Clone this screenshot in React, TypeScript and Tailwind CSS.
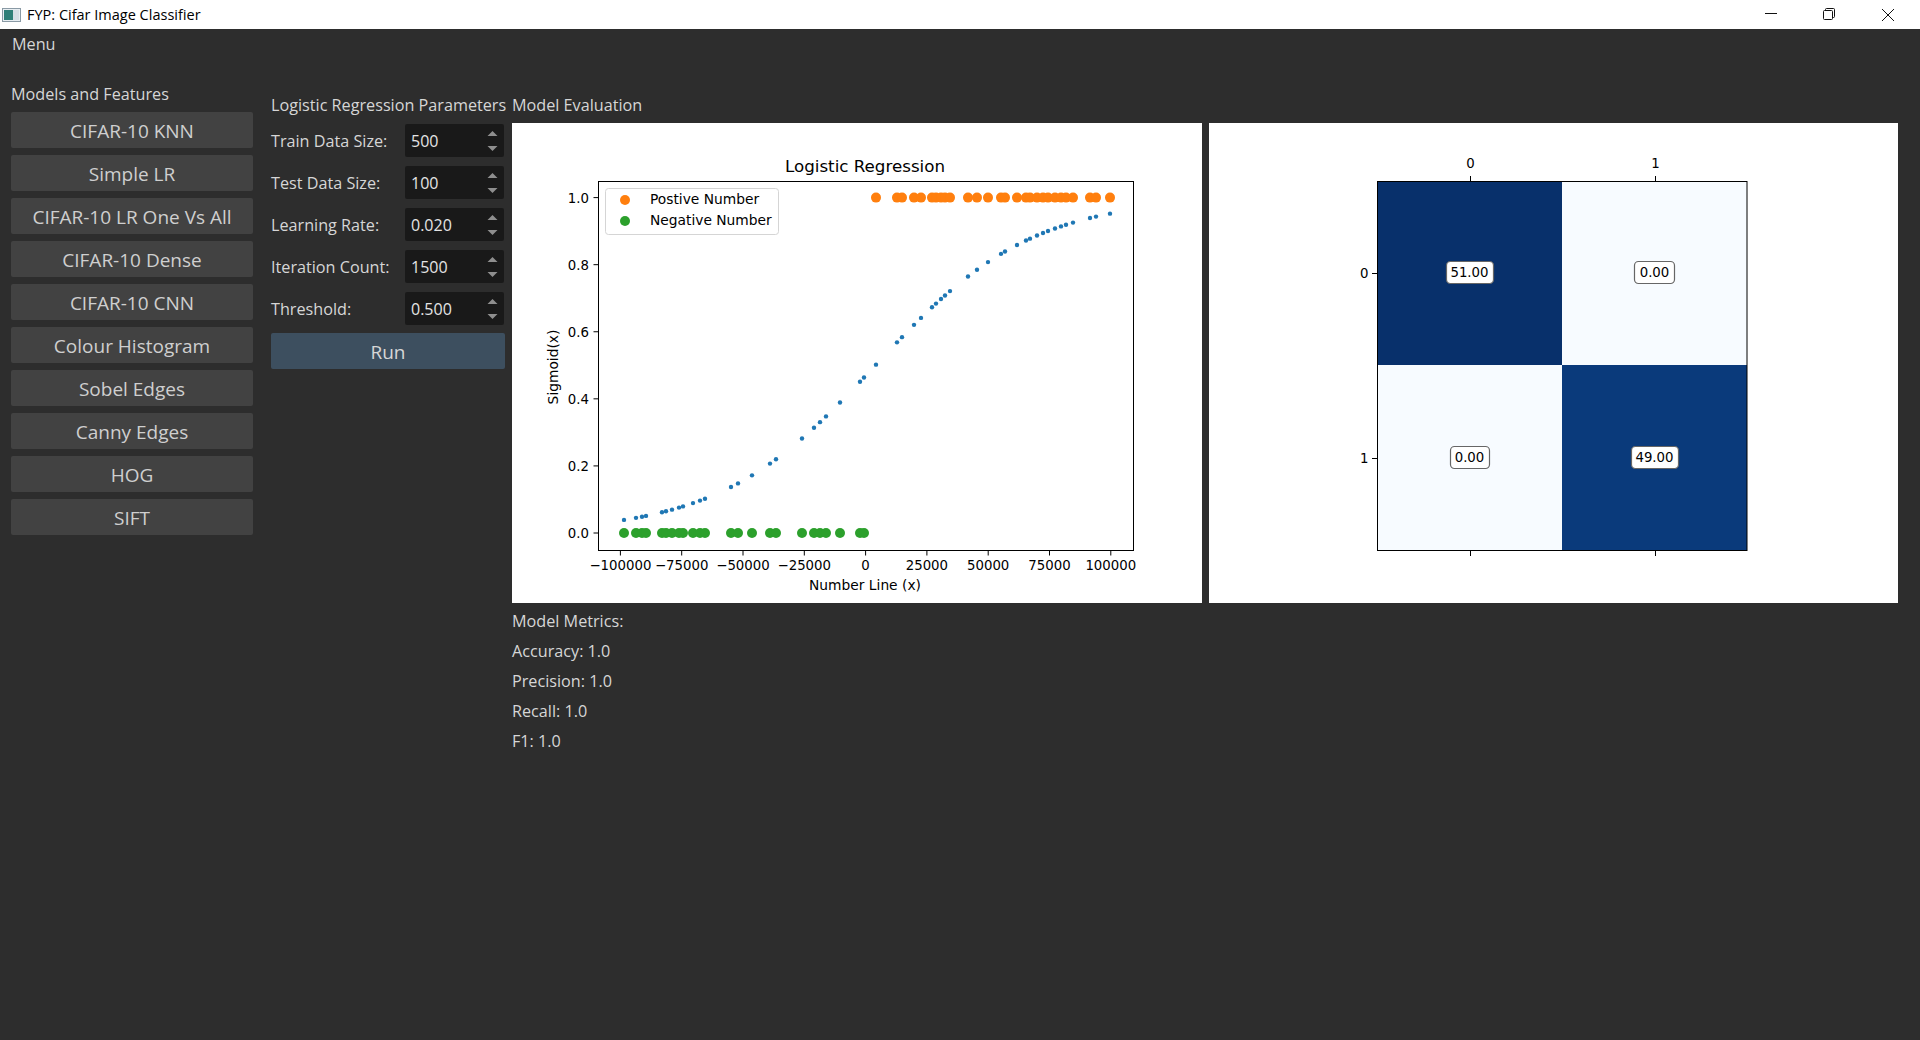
const models = [
  "CIFAR-10 KNN",
  "Simple LR",
  "CIFAR-10 LR One Vs All",
  "CIFAR-10 Dense",
  "CIFAR-10 CNN",
  "Colour Histogram",
  "Sobel Edges",
  "Canny Edges",
  "HOG",
  "SIFT",
];

const params = [
  { label: "Train Data Size:", value: "500" },
  { label: "Test Data Size:", value: "100" },
  { label: "Learning Rate:", value: "0.020" },
  { label: "Iteration Count:", value: "1500" },
  { label: "Threshold:", value: "0.500" },
];

const metrics = ["Model Metrics:", "Accuracy: 1.0", "Precision: 1.0", "Recall: 1.0", "F1: 1.0"];

// dot positions read off the reference, in page pixels
const positive = [
  876, 897, 902, 914, 921, 932, 936, 941, 945, 950, 968, 977, 988, 1001, 1005, 1017, 1026, 1030, 1037, 1043, 1048,
  1055, 1061, 1066, 1073, 1090, 1096, 1110,
];
const negative = [
  624, 636, 642, 646, 662, 666, 672, 679, 683, 693, 700, 705, 731, 738, 752, 770, 776, 802, 814, 820, 826, 840, 860,
  864,
];

const sigmoidY = (px: number) => {
  const x = ((px - 865.6) / 245.2) * 100000;
  return 533 - 335.4 / (1 + Math.exp(-(x - 4000) / 32000));
};

const xTicks = [-100000, -75000, -50000, -25000, 0, 25000, 50000, 75000, 100000];
const yTicks = [0, 0.2, 0.4, 0.6, 0.8, 1];

const tickText = "fill-black font-['DejaVu_Sans',sans-serif] text-[13.3px]";
const labelText = "fill-black font-['DejaVu_Sans',sans-serif] text-[13.8px]";

function LogisticPlot() {
  return (
    <svg viewBox="512 123 690 480" className="w-[690px] h-[480px] bg-white block">
      <text x={865} y={171.5} textAnchor="middle" className="fill-black font-['DejaVu_Sans',sans-serif] text-[16.7px]">
        Logistic Regression
      </text>
      {positive.map((x, i) => (
        <circle key={i} cx={x} cy={197.6} r={5} fill="#ff7f0e" />
      ))}
      {negative.map((x, i) => (
        <circle key={i} cx={x} cy={533} r={5} fill="#2ca02c" />
      ))}
      {[...negative, ...positive].map((x, i) => (
        <circle key={i} cx={x} cy={sigmoidY(x)} r={2.2} fill="#1f77b4" />
      ))}
      <rect x={598.5} y={181.5} width={535} height={369} fill="none" stroke="#000" strokeWidth={1} />
      {xTicks.map((t) => {
        const x = 865.6 + (t / 100000) * 245.2;
        return (
          <g key={t}>
            <line x1={x} x2={x} y1={550.5} y2={555.5} stroke="#000" />
            <text x={x} y={570} textAnchor="middle" className={tickText}>
              {t < 0 ? "\u2212" + -t : t}
            </text>
          </g>
        );
      })}
      {yTicks.map((t) => {
        const y = 533 - t * 335.4;
        return (
          <g key={t}>
            <line x1={593.5} x2={598.5} y1={y} y2={y} stroke="#000" />
            <text x={589} y={y + 5} textAnchor="end" className={tickText}>
              {t.toFixed(1)}
            </text>
          </g>
        );
      })}
      <text x={865} y={590} textAnchor="middle" className={labelText}>
        Number Line (x)
      </text>
      <text transform="translate(558 367) rotate(-90)" textAnchor="middle" className={labelText}>
        Sigmoid(x)
      </text>
      <rect x={605.5} y={188.5} width={173} height={46} rx={3} fill="#fff" stroke="#d5d5d5" />
      <circle cx={625} cy={200} r={5} fill="#ff7f0e" />
      <circle cx={625} cy={221} r={5} fill="#2ca02c" />
      <text x={650} y={204} className={labelText}>
        Postive Number
      </text>
      <text x={650} y={225} className={labelText}>
        Negative Number
      </text>
    </svg>
  );
}

const annots = [
  { x: 1446, y: 261, w: 47, h: 22, text: "51.00", tx: 1469.5 },
  { x: 1634, y: 261, w: 40, h: 22, text: "0.00", tx: 1654.5 },
  { x: 1450, y: 446, w: 39, h: 22, text: "0.00", tx: 1469.5 },
  { x: 1631, y: 446, w: 47, h: 22, text: "49.00", tx: 1654.5 },
];

function ConfusionMatrix() {
  return (
    <svg viewBox="1209 123 689 480" className="w-[689px] h-[480px] bg-white block">
      <rect x={1377} y={181} width={185} height={184} fill="#08306b" />
      <rect x={1562} y={181} width={185} height={184} fill="#f7fbff" />
      <rect x={1377} y={365} width={185} height={185} fill="#f7fbff" />
      <rect x={1562} y={365} width={185} height={185} fill="#0a3a7b" />
      <rect x={1377.5} y={181.5} width={369.5} height={369} fill="none" stroke="#000" />
      {[1470.5, 1655.5].map((x, i) => (
        <g key={x}>
          <line x1={x} x2={x} y1={176} y2={181} stroke="#000" />
          <line x1={x} x2={x} y1={551} y2={556} stroke="#000" />
          <text x={x} y={168} textAnchor="middle" className={tickText}>
            {i}
          </text>
        </g>
      ))}
      {[273.5, 458.5].map((y, i) => (
        <g key={y}>
          <line x1={1372} x2={1377} y1={y} y2={y} stroke="#000" />
          <text x={1368.5} y={y + 4} textAnchor="end" className={tickText}>
            {i}
          </text>
        </g>
      ))}
      {annots.map((a) => (
        <g key={a.x}>
          <rect x={a.x + 0.5} y={a.y + 0.5} width={a.w} height={a.h} rx={4} fill="#fff" stroke="#666" strokeWidth={1.2} />
          <text x={a.tx} y={a.y + 16} textAnchor="middle" className={tickText}>
            {a.text}
          </text>
        </g>
      ))}
    </svg>
  );
}

function SpinBox({ value }: { value: string }) {
  return (
    <div className="w-[99px] h-[33px] bg-[#191919] rounded-[2px] flex items-center justify-between pl-[6px] pr-[6px] text-[16px] text-[#e4e4e4]">
      <span>{value}</span>
      <svg width="11" height="22" viewBox="0 0 11 22">
        <path d="M5.5 1 L10.5 6 L0.5 6 Z" fill="#8e8e8e" />
        <path d="M0.5 16 L10.5 16 L5.5 21 Z" fill="#8e8e8e" />
      </svg>
    </div>
  );
}

function TitleBar() {
  return (
    <div className="h-[29px] bg-white flex items-center justify-between text-black text-[14.5px]">
      <div className="flex items-center">
        <svg width="19" height="14" viewBox="0 0 19 14" className="ml-[2px] mr-[6px]">
          <rect x="0.5" y="0.5" width="18" height="13" fill="#e8eef2" stroke="#8a9aa5" />
          <rect x="2" y="2" width="9" height="10" fill="#2f7f78" />
          <rect x="11" y="2" width="6" height="10" fill="#d5dee5" />
        </svg>
        <span>FYP: Cifar Image Classifier</span>
      </div>
      <div className="flex items-center">
        <svg width="14" height="14" viewBox="0 0 14 14" className="mr-[44px] mb-[2px]">
          <line x1="1" x2="13" y1="6.5" y2="6.5" stroke="#111" />
        </svg>
        <svg width="14" height="14" viewBox="0 0 14 14" className="mr-[45px] mb-[2px]">
          <rect x="1.5" y="3.5" width="9" height="9" rx="1" fill="none" stroke="#111" />
          <path d="M3.5 3.5 V2.5 a1 1 0 0 1 1 -1 h7 a1 1 0 0 1 1 1 v7 a1 1 0 0 1 -1 1 h-1" fill="none" stroke="#111" />
        </svg>
        <svg width="14" height="14" viewBox="0 0 14 14" className="mr-[25px]">
          <path d="M1 1 L13 13 M13 1 L1 13" stroke="#111" fill="none" />
        </svg>
      </div>
    </div>
  );
}

export default function App() {
  return (
    <div className="w-[1920px] h-[1040px] bg-[#2d2d2d] font-['Open_Sans',sans-serif] text-[16.2px] text-[#d6d6d6] overflow-hidden">
      <TitleBar />
      <div className="h-[30px] pl-3 flex items-center">Menu</div>
      <div className="flex items-start pl-[11px] pt-[25px]">
        <div className="w-[242px] flex flex-col">
          <div className="h-5 leading-5 mb-2">Models and Features</div>
          <div className="flex flex-col gap-[7px]">
            {models.map((m) => (
              <button key={m} className="h-9 pt-0.5 bg-[#424242] rounded-[2px] text-[19px] text-[#cfcfcf] text-center">
                {m}
              </button>
            ))}
          </div>
        </div>
        <div className="w-[234px] ml-[18px] mt-[11px] flex flex-col">
          <div className="h-5 leading-5 whitespace-nowrap mb-[9px]">Logistic Regression Parameters</div>
          <div className="flex flex-col gap-[9px]">
            {params.map((p) => (
              <div key={p.label} className="flex items-center justify-between pr-px">
                <span className="pt-px">{p.label}</span>
                <SpinBox value={p.value} />
              </div>
            ))}
          </div>
          <button className="h-9 mt-2 pt-0.5 bg-[#3d4f5f] rounded-[2px] text-[19px] text-[#d6d6d6]">Run</button>
        </div>
        <div className="ml-[7px] mt-[11px] flex flex-col">
          <div className="h-5 leading-5 mb-2">Model Evaluation</div>
          <div className="flex gap-[7px]">
            <LogisticPlot />
            <ConfusionMatrix />
          </div>
          <div className="mt-[3px] flex flex-col">
            {metrics.map((m) => (
              <div key={m} className="h-[30px] leading-[30px]">
                {m}
              </div>
            ))}
          </div>
        </div>
      </div>
    </div>
  );
}
